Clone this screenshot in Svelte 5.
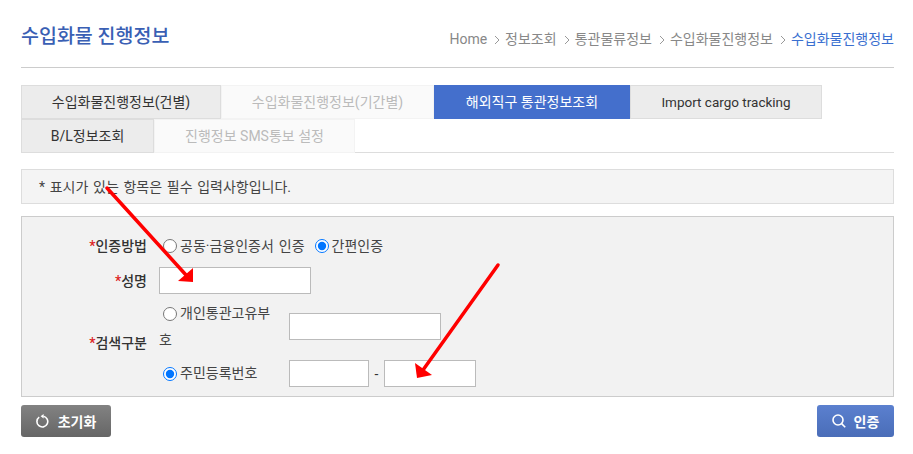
<script>
    const crumbs = ["Home", "정보조회", "통관물류정보", "수입화물진행정보"];
    const row1 = [
        { label: "수입화물진행정보(건별)", cls: "tab-a", width: 200 },
        { label: "수입화물진행정보(기간별)", cls: "tab-off", width: 213 },
        { label: "해외직구 통관정보조회", cls: "tab-on", width: 196 },
        { label: "Import cargo tracking", cls: "tab-a tab-en", width: 192 },
    ];
    const row2 = [
        { label: "B/L정보조회", cls: "tab-a", width: 133 },
        { label: "진행정보 SMS통보 설정", cls: "tab-off", width: 201 },
    ];
</script>

<div class="page">
    <header class="head">
        <h1>수입화물 진행정보</h1>
        <nav class="crumbs">
            {#each crumbs as c}
                <span>{c}</span>
                <svg class="sep" viewBox="0 0 6 10" aria-hidden="true">
                    <path d="M1 1l4 4-4 4" fill="none" stroke="#999" stroke-width="1" />
                </svg>
            {/each}
            <span class="here">수입화물진행정보</span>
        </nav>
    </header>

    <div class="tabs">
        <div class="tab-row">
            {#each row1 as t}
                <div class={"tab " + t.cls} style={`width: ${t.width}px`}>{t.label}</div>
            {/each}
        </div>
        <div class="tab-row">
            {#each row2 as t}
                <div class={"tab " + t.cls} style={`width: ${t.width}px`}>{t.label}</div>
            {/each}
        </div>
    </div>

    <p class="notice">* 표시가 있는 항목은 필수 입력사항입니다.</p>

    <form class="form">
        <div class="row row-auth">
            <div class="lbl"><em>*</em>인증방법</div>
            <div class="val">
                <label class="opt"><input type="radio" name="auth" />공동·금융인증서 인증</label>
                <label class="opt"><input type="radio" name="auth" checked />간편인증</label>
            </div>
        </div>
        <div class="row row-name">
            <div class="lbl"><em>*</em>성명</div>
            <div class="val"><input class="txt w-name" type="text" /></div>
        </div>
        <div class="row row-search">
            <div class="lbl"><em>*</em>검색구분</div>
            <div class="subs">
                <div class="sub sub-first">
                    <label class="wrap"><input type="radio" name="kind" />개인통관고유부호</label>
                    <input class="txt w-code" type="text" />
                </div>
                <div class="sub">
                    <label class="wrap"><input type="radio" name="kind" checked />주민등록번호</label>
                    <input class="txt w-id1" type="text" />
                    <span class="dash">-</span>
                    <input class="txt w-id2" type="text" />
                </div>
            </div>
        </div>
    </form>

    <div class="actions">
        <button type="button" class="btn btn-reset">
            <svg viewBox="0 0 14 14" width="14" height="14" aria-hidden="true">
                <path d="M3.2 3.2A5.4 5.4 0 1 0 7.4 2.3" fill="none" stroke="#fff" stroke-width="1.6" />
                <path d="M7.6 0v4.6L4.6 2.3z" fill="#fff" />
            </svg>
            초기화
        </button>
        <button type="button" class="btn btn-auth">
            <svg viewBox="0 0 14 14" width="14" height="14" aria-hidden="true">
                <circle cx="6" cy="6" r="5" fill="none" stroke="#fff" stroke-width="1.6" />
                <path d="M9.6 9.6l3.6 3.6" stroke="#fff" stroke-width="1.6" />
            </svg>
            인증
        </button>
    </div>

    <svg class="marks" viewBox="0 0 913 454" aria-hidden="true">
        <path d="M107 188L186 275" stroke="#f00" stroke-width="3.5" stroke-linecap="round" />
        <path d="M193 282L178 281L193 268z" fill="#f00" />
        <path d="M498 265L423 370" stroke="#f00" stroke-width="3.5" stroke-linecap="round" />
        <path d="M417 378L415 363L432 375z" fill="#f00" />
    </svg>
</div>

<style>
    :global(body) {
        background: #fff;
    }

    .page {
        position: relative;
        width: 873px;
        height: 454px;
        padding: 0 19px 0 21px;
        font-family: Roboto, "Noto Sans CJK KR", sans-serif;
        font-size: 14px;
        color: #333;
    }

    .head {
        box-sizing: border-box;
        display: flex;
        justify-content: space-between;
        align-items: flex-start;
        height: 68px;
        padding-top: 22px;
        border-bottom: 1px solid #ccc;
    }

    h1 {
        margin: 1px 0 0;
        font-size: 19.5px;
        line-height: 28px;
        font-weight: 500;
        color: #3a5fb4;
    }

    .crumbs {
        display: flex;
        align-items: center;
        margin-top: 7px;
        font-size: 14px;
        line-height: 20px;
        color: #888;
    }

    .sep {
        width: 6px;
        height: 10px;
        margin: 2px 5px 0 7px;
    }

    .here {
        color: #3a6fd0;
    }

    .tabs {
        box-sizing: border-box;
        height: 68px;
        margin-top: 17px;
        border-bottom: 1px solid #ddd;
    }

    .tab-row {
        display: flex;
        height: 34px;
    }

    .tab {
        box-sizing: border-box;
        display: flex;
        align-items: center;
        justify-content: center;
        font-size: 14px;
        line-height: 18px;
    }

    .tab-a {
        background: #ececec;
        border: 1px solid #ddd;
        color: #333;
    }

    .tab-en {
        font-size: 13.5px;
    }

    .tab-off {
        background: #fafafa;
        border: 1px solid #f3f3f3;
        color: #bbb;
    }

    .tab-on {
        background: #446fcc;
        color: #fff;
    }

    .notice {
        box-sizing: border-box;
        display: flex;
        align-items: center;
        height: 35px;
        margin: 16px 0 12px;
        padding: 0 17px;
        white-space: pre;
        word-spacing: 1.2px;
        background: #f4f4f4;
        border: 1px solid #ddd;
        font-size: 14px;
        line-height: 18px;
        color: #444;
    }

    .form {
        box-sizing: border-box;
        height: 181px;
        padding-top: 19px;
        background: #f2f2f2;
        border: 1px solid #ccc;
    }

    .row {
        display: flex;
        align-items: center;
    }

    .row-auth {
        height: 20px;
    }

    .row-name {
        height: 27px;
        margin-top: 11px;
    }

    .row-search {
        height: 88px;
        margin-top: 5px;
    }

    .lbl {
        width: 125px;
        text-align: right;
        font-size: 14px;
        line-height: 18px;
        font-weight: 500;
        color: #333;
    }

    .lbl em {
        font-style: normal;
        color: #d22;
    }

    .val {
        display: flex;
        align-items: center;
        margin-left: 12px;
    }

    .opt {
        display: flex;
        align-items: center;
        margin-right: 6px;
        word-spacing: 1.5px;
        line-height: 18px;
        color: #444;
    }

    input[type="radio"] {
        flex: none;
        width: 14px;
        height: 14px;
        margin: 0 3px 0 4px;
    }

    .txt {
        box-sizing: border-box;
        height: 27px;
        padding: 0 4px;
        background: #fff;
        border: 1px solid #bbb;
        border-radius: 0;
    }

    .w-name,
    .w-code {
        width: 152px;
    }

    .w-id1 {
        width: 80px;
    }

    .w-id2 {
        width: 92px;
    }

    .subs {
        margin-left: 12px;
    }

    .sub {
        display: flex;
        align-items: center;
        height: 27px;
    }

    .sub-first {
        height: 55px;
        margin-bottom: 6px;
    }

    .sub-first .wrap {
        padding-top: 1px;
    }

    /* radio sits in the text run, so the long label wraps under it */
    .wrap {
        box-sizing: border-box;
        align-self: flex-start;
        width: 130px;
        padding-right: 10px;
        line-height: 27px;
        word-break: break-all;
        color: #444;
    }

    .wrap input {
        vertical-align: -3px;
    }

    .dash {
        width: 15px;
        text-align: center;
    }

    .actions {
        display: flex;
        justify-content: space-between;
        margin-top: 8px;
    }

    .btn {
        display: flex;
        align-items: center;
        justify-content: center;
        gap: 8px;
        height: 32px;
        padding: 0;
        border: 0;
        border-radius: 3px;
        color: #fff;
        font-family: inherit;
        font-size: 14px;
        font-weight: 700;
    }

    .btn-reset {
        width: 90px;
        background: linear-gradient(#828282, #666);
    }

    .btn-auth {
        width: 77px;
        background: linear-gradient(#5b80cf, #4a6db8);
    }

    .marks {
        position: absolute;
        left: 0;
        top: 0;
        width: 913px;
        height: 454px;
        pointer-events: none;
    }
</style>
